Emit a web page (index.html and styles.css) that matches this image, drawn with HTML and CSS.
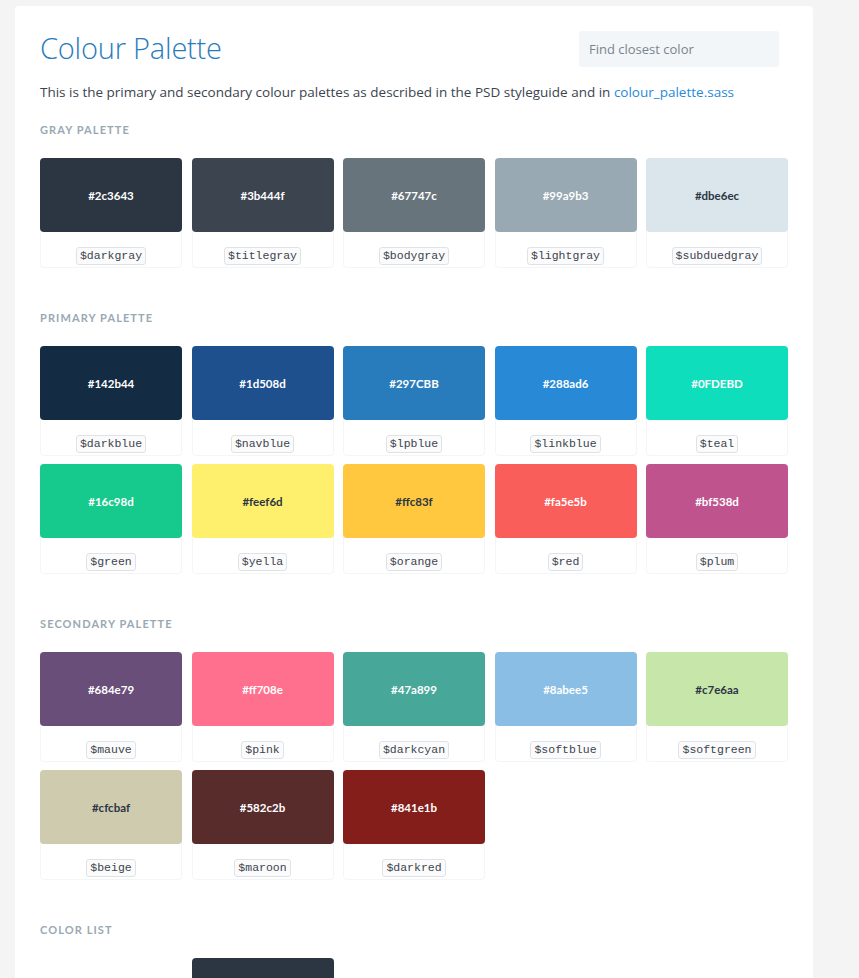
FILE: index.html
```html
<!DOCTYPE html>
<html>
<head>
<meta charset="utf-8">
<title>Colour Palette</title>
<link rel="stylesheet" href="styles.css">
</head>
<body>
<div class="page">
  <div class="header">
    <h1 class="title">Colour Palette</h1>
    <input class="search" type="text" placeholder="Find closest color">
  </div>
  <p class="intro">This is the primary and secondary colour palettes as described in the PSD styleguide and in <a href="#">colour_palette.sass</a></p>

  <h2 class="section-title">Gray Palette</h2>
  <div class="grid">
    <div class="swatch"><div class="chip" style="background:#2c3643">#2c3643</div><div class="name"><code>$darkgray</code></div></div>
    <div class="swatch"><div class="chip" style="background:#3b444f">#3b444f</div><div class="name"><code>$titlegray</code></div></div>
    <div class="swatch"><div class="chip" style="background:#67747c">#67747c</div><div class="name"><code>$bodygray</code></div></div>
    <div class="swatch"><div class="chip" style="background:#99a9b3">#99a9b3</div><div class="name"><code>$lightgray</code></div></div>
    <div class="swatch"><div class="chip dark" style="background:#dbe6ec">#dbe6ec</div><div class="name"><code>$subduedgray</code></div></div>
  </div>

  <h2 class="section-title">Primary Palette</h2>
  <div class="grid">
    <div class="swatch"><div class="chip" style="background:#142b44">#142b44</div><div class="name"><code>$darkblue</code></div></div>
    <div class="swatch"><div class="chip" style="background:#1d508d">#1d508d</div><div class="name"><code>$navblue</code></div></div>
    <div class="swatch"><div class="chip" style="background:#297CBB">#297CBB</div><div class="name"><code>$lpblue</code></div></div>
    <div class="swatch"><div class="chip" style="background:#288ad6">#288ad6</div><div class="name"><code>$linkblue</code></div></div>
    <div class="swatch"><div class="chip" style="background:#0FDEBD">#0FDEBD</div><div class="name"><code>$teal</code></div></div>
    <div class="swatch"><div class="chip" style="background:#16c98d">#16c98d</div><div class="name"><code>$green</code></div></div>
    <div class="swatch"><div class="chip dark" style="background:#feef6d">#feef6d</div><div class="name"><code>$yella</code></div></div>
    <div class="swatch"><div class="chip dark" style="background:#ffc83f">#ffc83f</div><div class="name"><code>$orange</code></div></div>
    <div class="swatch"><div class="chip" style="background:#fa5e5b">#fa5e5b</div><div class="name"><code>$red</code></div></div>
    <div class="swatch"><div class="chip" style="background:#bf538d">#bf538d</div><div class="name"><code>$plum</code></div></div>
  </div>

  <h2 class="section-title">Secondary Palette</h2>
  <div class="grid">
    <div class="swatch"><div class="chip" style="background:#684e79">#684e79</div><div class="name"><code>$mauve</code></div></div>
    <div class="swatch"><div class="chip" style="background:#ff708e">#ff708e</div><div class="name"><code>$pink</code></div></div>
    <div class="swatch"><div class="chip" style="background:#47a899">#47a899</div><div class="name"><code>$darkcyan</code></div></div>
    <div class="swatch"><div class="chip" style="background:#8abee5">#8abee5</div><div class="name"><code>$softblue</code></div></div>
    <div class="swatch"><div class="chip dark" style="background:#c7e6aa">#c7e6aa</div><div class="name"><code>$softgreen</code></div></div>
    <div class="swatch"><div class="chip dark" style="background:#cfcbaf">#cfcbaf</div><div class="name"><code>$beige</code></div></div>
    <div class="swatch"><div class="chip" style="background:#582c2b">#582c2b</div><div class="name"><code>$maroon</code></div></div>
    <div class="swatch"><div class="chip" style="background:#841e1b">#841e1b</div><div class="name"><code>$darkred</code></div></div>
  </div>

  <h2 class="section-title list-title">Color List</h2>
  <div class="grid">
    <div class="swatch"><div class="chip blank"></div><div class="name"></div></div>
    <div class="swatch"><div class="chip" style="background:#2c3643"></div><div class="name"></div></div>
  </div>
</div>
</body>
</html>
```

FILE: styles.css
```css
html, body {
  margin: 0;
  padding: 0;
}
body {
  background: #f4f4f4;
  padding: 6px 0 0 15px;
  font-family: "Open Sans", "Liberation Sans", sans-serif;
  color: #3b444f;
}
.page {
  box-sizing: border-box;
  width: 798px;
  background: #fff;
  border-radius: 4px;
  padding: 23px 24px 40px 25px;
  min-height: 1000px;
}
.header {
  display: flex;
  justify-content: space-between;
  align-items: flex-start;
}
.title {
  margin: 0;
  font-weight: 300;
  font-size: 29px;
  line-height: 38px;
  color: #297cbb;
  letter-spacing: -0.2px;
}
.search {
  box-sizing: border-box;
  width: 200px;
  height: 36px;
  margin-top: 2px;
  margin-right: 10px;
  border: none;
  border-radius: 3px;
  background: #f3f6f9;
  padding: 0 10px;
  font-family: "Open Sans", "Liberation Sans", sans-serif;
  font-size: 13px;
  color: #67747c;
  outline: none;
}
.search::placeholder {
  color: #79858d;
}
.intro {
  margin: 15px 0 0;
  font-size: 13.5px;
  line-height: 20px;
  color: #3b444f;
}
.intro a {
  color: #288ad6;
  text-decoration: none;
}
.section-title {
  margin: 20px 0 0;
  font-family: Lato, "Liberation Sans", sans-serif;
  font-weight: 700;
  font-size: 11px;
  line-height: 16px;
  letter-spacing: 1.1px;
  text-transform: uppercase;
  color: #99a9b3;
}
.grid + .section-title {
  margin-top: 42px;
}
.grid {
  margin-top: 20px;
  display: grid;
  grid-template-columns: repeat(5, 142px);
  column-gap: 9.5px;
  row-gap: 8px;
}
.swatch {
  height: 110px;
  border: 1px solid #f4f5f6;
  border-radius: 4px;
  box-sizing: border-box;
  display: flex;
  flex-direction: column;
}
.chip {
  margin: -1px -1px 0;
  height: 74px;
  border-radius: 4px;
  display: flex;
  align-items: center;
  justify-content: center;
  font-family: Lato, "Liberation Sans", sans-serif;
  font-weight: 700;
  font-size: 11.5px;
  color: #fff;
}
.chip.dark {
  color: #2c3643;
}
.chip.blank {
  background: #fff;
}
.name {
  flex: 1;
  display: flex;
  align-items: center;
  justify-content: center;
  padding-top: 12px;
}
.name code {
  font-family: "Liberation Mono", "DejaVu Sans Mono", monospace;
  font-size: 11.5px;
  line-height: 14px;
  color: #3b444f;
  border: 1px solid #dde3e8;
  border-radius: 3px;
  background: #fbfbfb;
  padding: 1px 3px;
}
```
